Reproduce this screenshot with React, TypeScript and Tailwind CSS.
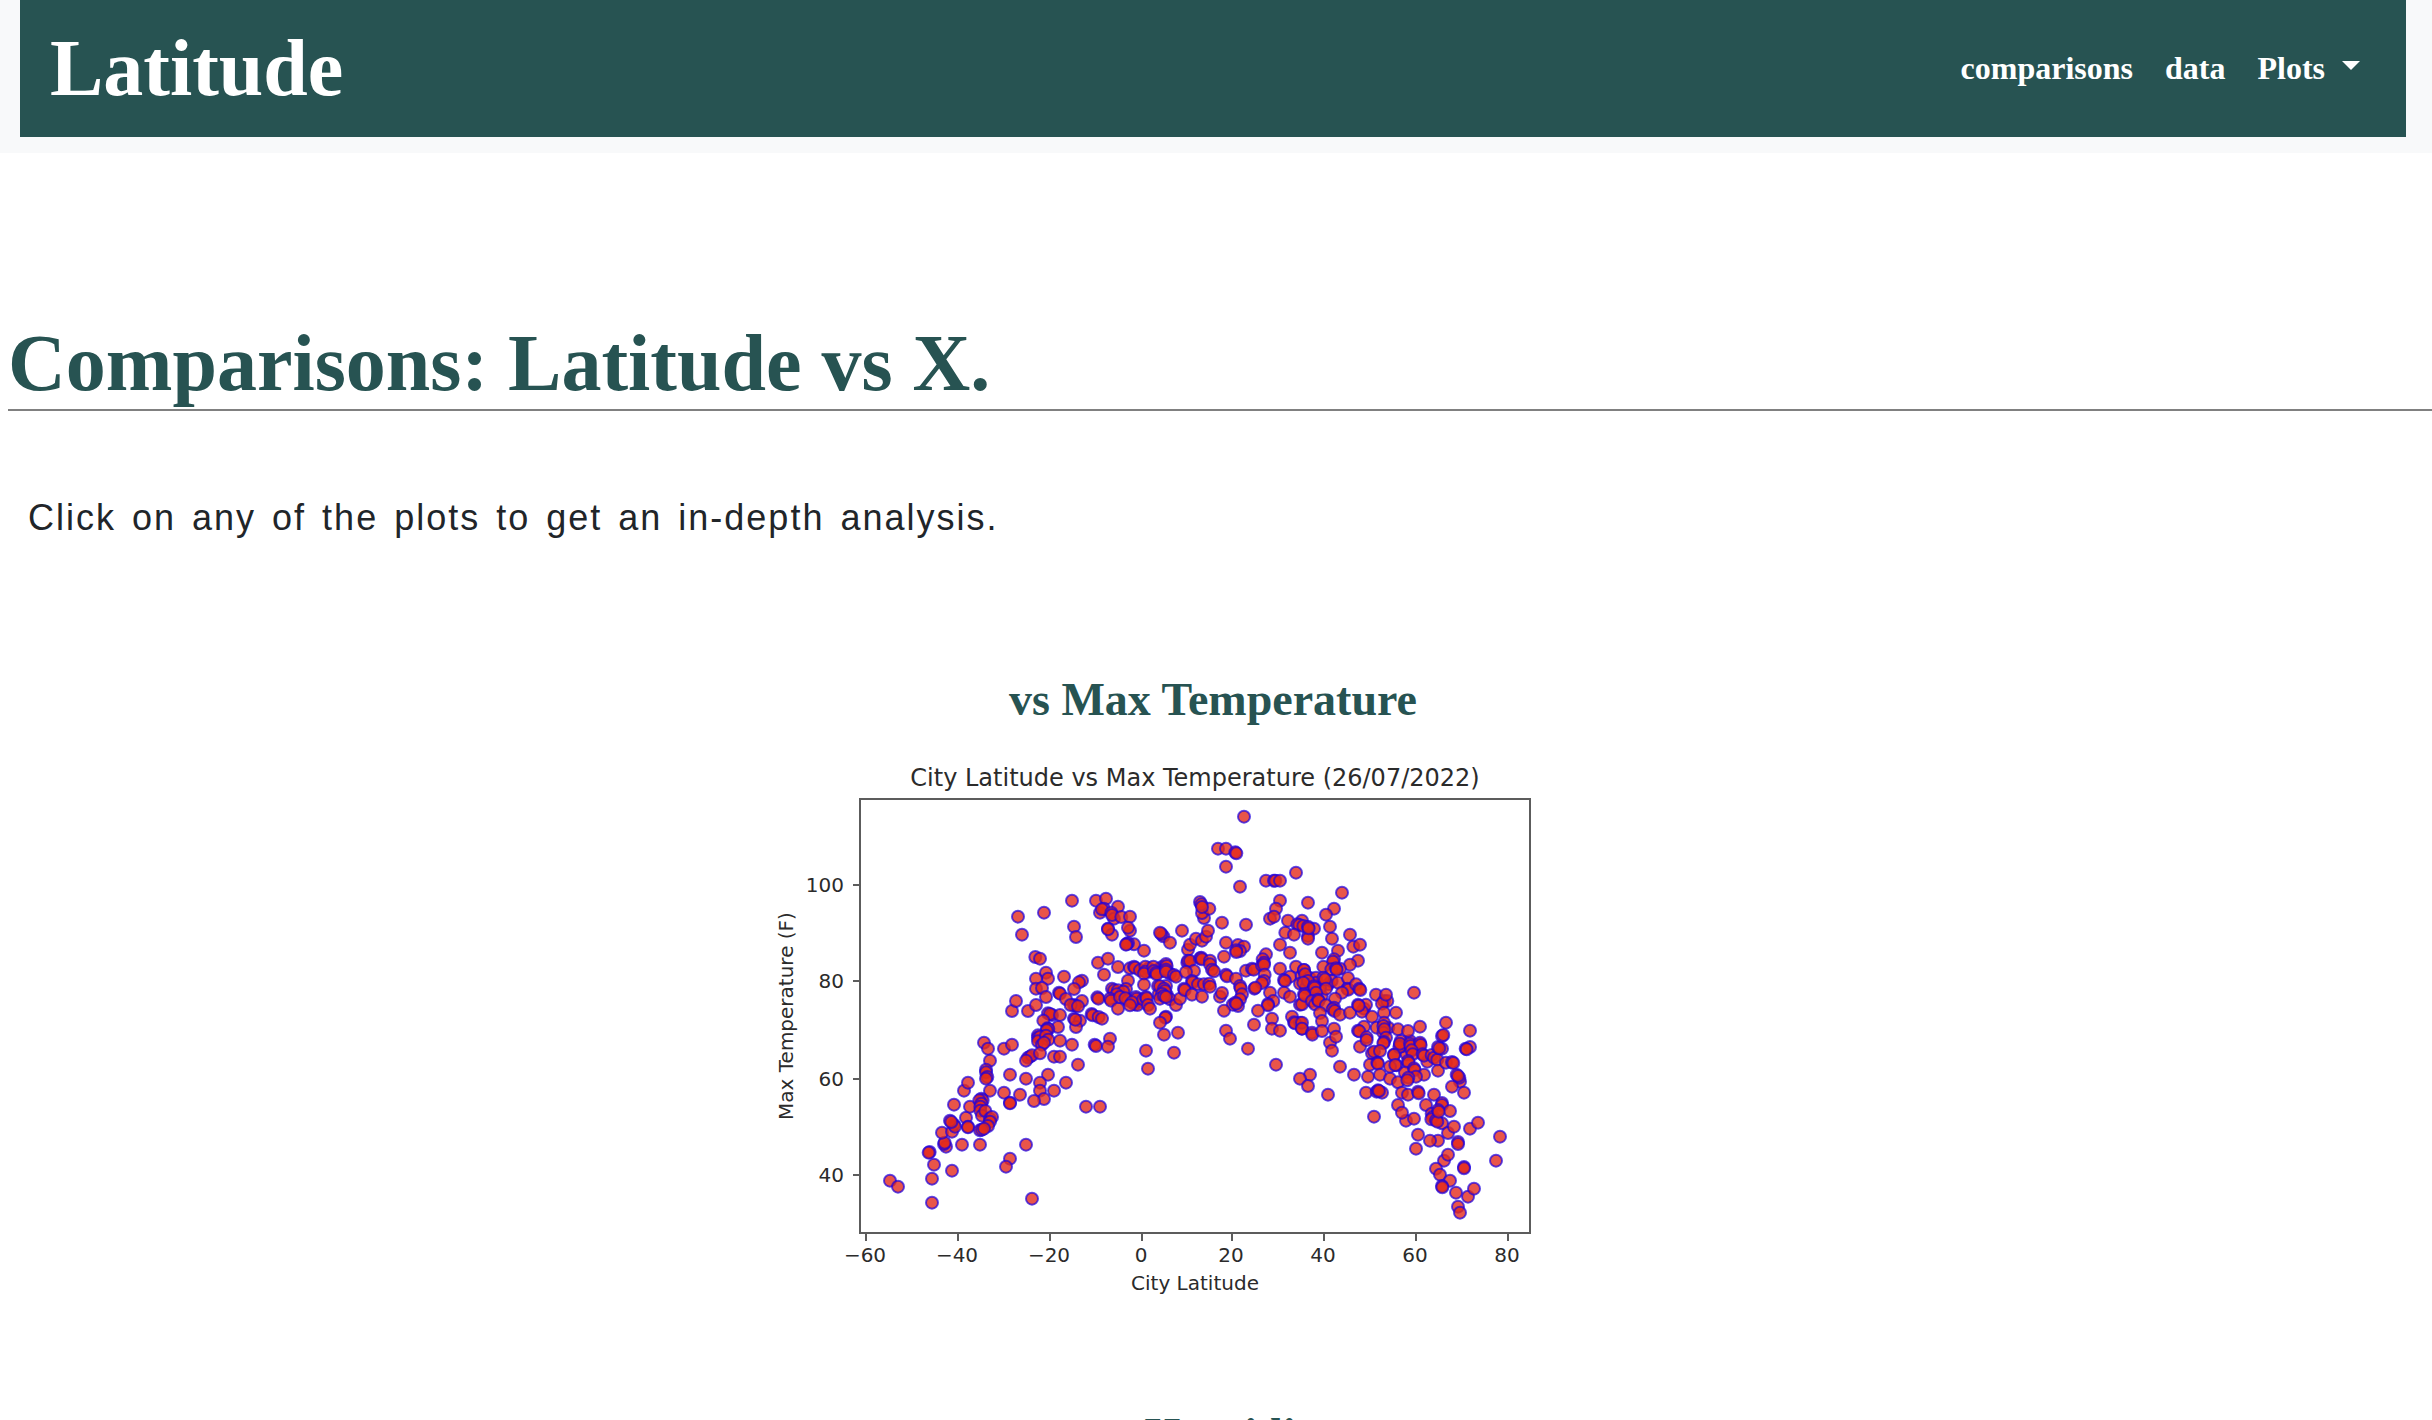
type Pair = [number, number];

const X_TICKS: { at: number; label: string }[] = [
  { at: 93, label: "−60" },
  { at: 185, label: "−40" },
  { at: 277, label: "−20" },
  { at: 369, label: "0" },
  { at: 459, label: "20" },
  { at: 551, label: "40" },
  { at: 643, label: "60" },
  { at: 735, label: "80" },
];

const Y_TICKS: { at: number; label: string }[] = [
  { at: 134, label: "100" },
  { at: 230, label: "80" },
  { at: 328, label: "60" },
  { at: 424, label: "40" },
];

// Cities by band of latitude. Each band has an origin inside the figure and
// holds its points as "x,y" pairs in thirds of a unit from that origin.
const BANDS: { origin: Pair; points: string }[] = [
  {
    origin: [67, 110],
    points:
      "150,959 174,977 276,953 276,1025 282,911 269,873 266,875 336,929 366,851 420,851 318,857 312,849 314,845 306,815 336,812 342,791 345,797 330,779 334,783 378,770 390,737 384,797 384,799 342,731 372,689 384,665 432,545 444,563 450,599 438,626 438,634 442,648 438,653 450,689 424,713 428,718 418,718 424,728 421,737 421,749 426,764 436,750 450,773 456,768 450,782 444,795 420,808 426,806 432,803",
  },
  {
    origin: [227, 110],
    points:
      "12,563 36,551 12,695 30,725 30,727 60,701 36,450 48,420 84,450 54,167 66,221 132,155 216,119 222,197 228,228 106,288 120,293 138,335 144,353 108,353 108,383 126,381 138,408 108,432 192,347 177,395 180,398 198,414 246,359 237,364 222,384 246,420 222,432 226,434 212,432 234,436 144,457 156,462 150,459 180,462 130,479 174,498 142,502 145,504 140,508 114,523 114,530 120,527 114,541 138,524 145,536 126,551 132,545 180,539 216,551 222,473 240,479 228,498 226,476 275,459 278,463 296,468 306,473 292,409 295,413 90,587 84,590 96,583 78,599 120,577 162,587 180,587 234,611 30,641 78,653 144,641 120,665 120,689 198,665 162,689 132,714 102,720 258,737 300,737 78,851 30,893 18,917 96,1013 288,119 318,113 354,137 300,155 312,143 306,145 334,155 342,173 336,162 364,168 390,167 324,203 336,221 324,205 390,209 384,200 402,250 384,246 380,249 378,251 432,269 294,305 324,293 312,341 354,318 390,322 402,317 405,320 420,328 446,322 450,332 475,325 484,330 486,318 510,338 436,317 436,332 432,338 460,317 462,330 468,335 470,340 384,359 378,384 432,371 336,383 342,388 354,388 370,392 350,400 330,413 333,419 354,443 360,408 384,418 404,430 420,420 376,412 412,432 408,408 410,413 396,424 390,433 430,415 438,408 440,412 444,432 450,443 284,551 288,555 330,533 324,557 438,569 444,623 522,575 490,226 484,219 480,215 510,245 546,209 498,309 500,315 498,326 498,332 522,342 528,347 474,375 498,375 476,400 500,400 510,415 480,376 492,383 495,390 486,399 480,413 492,405 498,408 528,432 540,413 498,467 496,470 480,485 492,521 534,515",
  },
  {
    origin: [387, 30],
    points:
      "84,506 90,491 108,473 126,479 138,467 144,449 132,411 126,396 148,383 120,363 124,370 126,378 186,425 258,431 252,107 174,203 198,203 226,214 229,217 198,257 240,317 318,299 342,299 346,299 360,299 408,275 360,359 348,383 330,413 342,407 82,545 84,539 90,540 120,532 124,530 126,535 150,539 150,550 156,566 162,571 102,570 78,573 96,600 98,604 114,610 72,623 74,627 96,641 126,647 132,610 148,608 150,617 180,647 186,636 192,527 198,485 234,492 252,497 240,510 228,508 229,513 198,581 201,586 228,593 240,615 242,622 258,569 276,563 281,566 318,520 308,535 306,553 312,545 312,551 314,581 312,600 306,606 283,623 286,620 246,640 240,655 234,675 218,671 226,665 229,668 192,689 330,635 340,660 324,669 324,673 294,689 282,731 336,713 336,743 360,749 198,749 210,773 264,803 348,851 384,419 426,419 412,430 418,432 376,455 402,461 360,491 390,515 360,563 408,557 432,567 390,587 372,597 375,600 425,585 420,608 372,635 390,647 420,671 396,707 402,724 420,725 405,727 426,743",
  },
  {
    origin: [527, 90],
    points:
      "24,185 126,155 102,203 78,221 90,257 96,293 10,255 42,263 24,285 24,293 24,257 26,262 66,335 114,329 150,281 160,317 180,311 174,359 150,371 102,355 99,362 70,377 120,383 94,385 108,382 110,386 12,387 28,410 48,410 15,400 35,430 50,425 30,445 18,440 85,430 95,420 65,465 24,420 10,425 60,440 70,410 75,415 42,436 44,440 78,443 48,455 6,490 12,460 14,464 36,480 45,490 54,476 56,480 114,425 144,411 142,443 145,446 126,455 168,430 178,443 181,447 105,473 78,493 60,516 66,540 102,500 98,505 104,510 120,521 150,515 192,503 198,491 186,512 174,491 176,494 216,527 228,461 252,480 262,480 246,488 258,461 252,515 288,515 342,455 6,545 6,563 36,575 37,581 66,570 102,563 90,605 108,587 96,629 30,701 0,713 24,735 84,761 120,677 162,701 180,617 192,557 174,569 178,571 200,589 200,597 204,707 222,827 230,560 265,560 252,545 250,555 250,575 253,565 258,590 252,603 250,607 216,637 222,632 240,630 282,641 300,610 310,615 330,600 340,625 320,640 360,610 210,671 232,665 234,668 290,673 270,677 294,565 324,570 360,557 240,701 270,713 294,724 198,755 246,755 230,752 234,748 237,750",
  },
  {
    origin: [587, 210],
    points:
      "122,240 124,255 118,258 120,248 150,248 152,255 180,245 182,252 155,268 158,280 102,282 106,312 144,300 146,305 135,335 162,322 164,327 192,341 168,347 145,350 142,358 126,395 144,401 174,392 176,397 114,432 138,479 126,455 162,473 174,521 168,563 202,302 188,280 192,284 215,282 222,290 232,296 246,263 234,258 238,262 258,185 246,225 250,222 330,209 330,258 317,263 320,265 234,329 258,305 276,303 280,306 300,362 298,350 290,341 294,345 276,377 312,395 222,401 198,432 246,426 246,432 270,450 215,458 218,468 214,475 246,487 228,478 232,482 234,447 236,452 264,516 282,497 330,503 354,485 420,527 408,599 234,539 210,539 294,543 294,549 252,599 264,581 228,623 240,641 270,659 246,675 247,679 312,618 312,622 288,695 324,707 342,683 294,737 300,755",
  },
];

const CITIES: Pair[] = BANDS.flatMap(({ origin, points }) =>
  points.split(" ").map((pair): Pair => {
    const [x, y] = pair.split(",").map(Number);
    return [origin[0] + x / 3, origin[1] + y / 3];
  }),
);

function TemperaturePlot() {
  return (
    <svg
      viewBox="0 0 880 560"
      role="img"
      aria-label="City Latitude vs Max Temperature"
      className="block w-[880px] max-w-full font-['DejaVu_Sans',sans-serif]"
    >
      <g fill="#2b2b2b" fontSize="20">
        <text x="422" y="35" fontSize="24" textAnchor="middle">
          City Latitude vs Max Temperature (26/07/2022)
        </text>
        {X_TICKS.map((t) => (
          <text key={t.label} x={t.at - 1} y="511" textAnchor="middle">
            {t.label}
          </text>
        ))}
        {Y_TICKS.map((t) => (
          <text key={t.label} x="71" y={t.at + 7} textAnchor="end">
            {t.label}
          </text>
        ))}
        <text x="422" y="539" textAnchor="middle">
          City Latitude
        </text>
        <text transform="translate(20 265) rotate(-90)" textAnchor="middle">
          Max Temperature (F)
        </text>
      </g>
      <g fill="#e32a1c" fillOpacity="0.8" stroke="#1c00e0" strokeOpacity="0.7" strokeWidth="2">
        {CITIES.map(([x, y], i) => (
          <circle key={i} cx={x} cy={y} r="6" />
        ))}
      </g>
      <g fill="none" stroke="#5c5c5c" strokeWidth="2">
        <rect x="87" y="48" width="670" height="434" />
        {X_TICKS.map((t) => (
          <path key={t.label} d={`M${t.at} 482v8`} />
        ))}
        {Y_TICKS.map((t) => (
          <path key={t.label} d={`M87 ${t.at}h-7`} />
        ))}
      </g>
    </svg>
  );
}

function Header() {
  return (
    <header className="bg-[#f8f9fa] pr-[26px] pb-4 pl-5">
      <nav className="flex h-[137px] items-center justify-between bg-[#275352] pr-[46px] pb-[2px] pl-[30px] font-['Liberation_Serif',serif] font-bold text-white">
        <a href="#home" className="text-[80px] leading-[120px]">
          Latitude
        </a>
        <div className="flex items-center gap-8 text-[32px] leading-[48px]">
          <a href="#comparisons">comparisons</a>
          <a href="#data">data</a>
          <button type="button" className="flex items-center gap-[17px]">
            Plots
            <svg viewBox="0 0 18 9" className="mb-1 h-[9px] w-[18px]" fill="currentColor" aria-hidden="true">
              <path d="M0 0h18L9 9z" />
            </svg>
          </button>
        </div>
      </nav>
    </header>
  );
}

const heading =
  "text-center font-[Georgia,'Liberation_Serif',serif] text-[46px] leading-[48px] font-bold text-[#275352]";

export default function App() {
  return (
    <div className="h-screen overflow-x-hidden overflow-y-auto bg-white">
      <Header />
      <main>
        <h1 className="mt-[164px] ml-2 border-b-2 border-[#808080] font-['Liberation_Serif',serif] text-[80px] leading-[92px] font-bold text-[#275352]">
          Comparisons: Latitude vs X.
        </h1>
        <p className="mt-20 ml-7 font-['Liberation_Sans',sans-serif] text-[36px] leading-[54px] tracking-[2px] text-[#212529] [word-spacing:4px]">
          Click on any of the plots to get an in-depth analysis.
        </p>
        <section className="mt-[131px] pr-1.5">
          <h2 className={heading}>vs Max Temperature</h2>
          <a href="#max-temperature" className="mt-[27px] flex justify-center">
            <TemperaturePlot />
          </a>
        </section>
        <section className="mt-[100px] pr-1.5">
          <h2 className={heading}>vs Humidity</h2>
        </section>
      </main>
    </div>
  );
}
